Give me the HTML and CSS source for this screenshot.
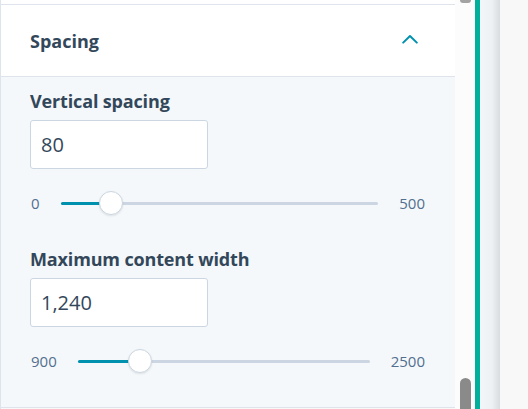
FILE: index.html
```html
<!DOCTYPE html>
<html>
<head>
<meta charset="utf-8">
<link rel="stylesheet" href="styles.css">
</head>
<body>
<div class="layout">
  <div class="panel">
    <div class="prev"></div>
    <div class="section-head">
      <span class="section-title">Spacing</span>
      <svg class="chev" width="16" height="10" viewBox="0 0 16 10"><path d="M1.2 8.6 L8 2 L14.8 8.6" fill="none" stroke="#0091ae" stroke-width="2" stroke-linecap="round" stroke-linejoin="round"/></svg>
    </div>
    <div class="section-body">
      <div class="field">
        <div class="label">Vertical spacing</div>
        <div class="input">80</div>
        <div class="slider">
          <span class="lim">0</span>
          <div class="track">
            <div class="fill" style="width:16%"></div>
            <div class="thumb" style="left:16%"></div>
          </div>
          <span class="lim">500</span>
        </div>
      </div>
      <div class="field">
        <div class="label">Maximum content width</div>
        <div class="input">1,240</div>
        <div class="slider">
          <span class="lim">900</span>
          <div class="track">
            <div class="fill" style="width:21.25%"></div>
            <div class="thumb" style="left:21.25%"></div>
          </div>
          <span class="lim">2500</span>
        </div>
      </div>
    </div>
  </div>
  <div class="scrollbar">
    <div class="thumb-top"></div>
    <div class="thumb-bottom"></div>
  </div>
  <div class="accent"></div>
  <div class="shade"></div>
  <div class="rest"></div>
</div>
</body>
</html>
```
FILE: styles.css
```css
html, body {
  margin: 0;
  padding: 0;
  height: 100%;
  overflow: hidden;
}
body {
  font-family: "Open Sans", "Liberation Sans", sans-serif;
  color: #33475b;
  background: #f8f8f8;
}
.layout {
  display: flex;
  height: 409px;
}
.panel {
  width: 455px;
  flex: none;
  display: flex;
  flex-direction: column;
  box-sizing: border-box;
  border-left: 1px solid #dfe3eb;
}
.prev {
  height: 4px;
  background: #fff;
  border-bottom: 1px solid #dfe3eb;
}
.section-head {
  height: 71px;
  background: #fff;
  border-bottom: 1px solid #dfe3eb;
  display: flex;
  align-items: center;
  justify-content: space-between;
  padding: 0 37px 0 29px;
}
.section-title {
  font-size: 18px;
  font-weight: 700;
  line-height: 24px;
}
.chev {
  display: block;
  margin-top: -3px;
}
.section-body {
  background: #f5f8fa;
  padding: 12px 30px 34px 29px;
  border-bottom: 1px solid #dfe3eb;
}
.field + .field {
  margin-top: 32px;
}
.label {
  font-size: 18px;
  font-weight: 700;
  line-height: 24px;
  letter-spacing: -0.15px;
}
.input {
  margin-top: 7px;
  box-sizing: border-box;
  width: 178px;
  height: 49px;
  background: #fff;
  border: 1px solid #cbd6e2;
  border-radius: 3px;
  padding-left: 10px;
  font-size: 20px;
  line-height: 47px;
}
.slider {
  margin-top: 22px;
  height: 24px;
  display: flex;
  align-items: center;
  gap: 21px;
  padding-left: 1px;
}
.lim {
  font-size: 15px;
  color: #516f90;
}
.track {
  flex: 1;
  height: 3px;
  background: #cbd6e2;
  border-radius: 2px;
  position: relative;
}
.fill {
  height: 3px;
  background: #0091ae;
  border-radius: 2px;
}
.thumb {
  position: absolute;
  top: 50%;
  width: 24px;
  height: 24px;
  box-sizing: border-box;
  margin: -12px 0 0 -12px;
  border-radius: 50%;
  background: #fff;
  border: 1px solid #cbd6e2;
  box-shadow: 0 1px 2px rgba(45, 62, 80, 0.12);
}
.scrollbar {
  width: 20px;
  flex: none;
  background: #fcfcfc;
  display: flex;
  flex-direction: column;
  justify-content: space-between;
  align-items: center;
}
.thumb-top {
  width: 11px;
  height: 3px;
  background: #a3a3a3;
  border-radius: 0 0 5px 5px;
}
.thumb-bottom {
  width: 11px;
  height: 31px;
  background: #8a8a8a;
  border-radius: 6px 6px 0 0;
}
.accent {
  width: 5px;
  flex: none;
  background: #00b09b;
}
.shade {
  width: 20px;
  flex: none;
  background: linear-gradient(to right, #f3f6f9 0%, #eef1f4 60%, #d9dcde 100%);
}
.rest {
  flex: 1;
  background: #f8f8f8;
}
```
